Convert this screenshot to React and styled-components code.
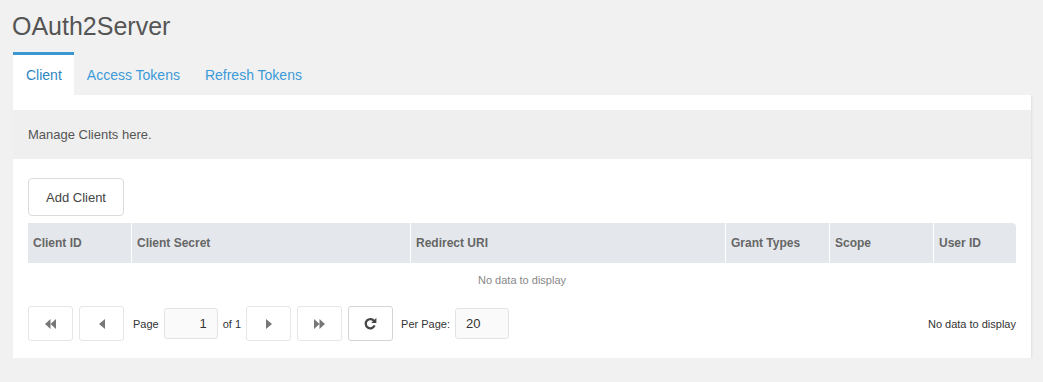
import React from "react";
import styled, { createGlobalStyle } from "styled-components";

const GlobalStyle = createGlobalStyle`
    body {
        margin: 0;
        background: #f1f1f1;
        font-family: "Liberation Sans", Arial, sans-serif;
        color: #555;
    }
`;

const columns = [
    { label: "Client ID", width: 103 },
    { label: "Client Secret", width: 278 },
    { label: "Redirect URI", width: 314 },
    { label: "Grant Types", width: 103 },
    { label: "Scope", width: 103 },
    { label: "User ID", width: 82 },
];

const tabs = ["Client", "Access Tokens", "Refresh Tokens"];

const FirstIcon = () => (
    <svg width="12" height="10" viewBox="0 0 12 10">
        <path d="M0 5 L5.5 0 L5.5 10 Z M5.5 5 L11 0 L11 10 Z" fill="#777" />
    </svg>
);

const PrevIcon = () => (
    <svg width="6" height="10" viewBox="0 0 6 10">
        <path d="M0 5 L6 0 L6 10 Z" fill="#777" />
    </svg>
);

const NextIcon = () => (
    <svg width="6" height="10" viewBox="0 0 6 10">
        <path d="M6 5 L0 0 L0 10 Z" fill="#777" />
    </svg>
);

const LastIcon = () => (
    <svg width="12" height="10" viewBox="0 0 12 10">
        <path d="M11 5 L5.5 0 L5.5 10 Z M5.5 5 L0 0 L0 10 Z" fill="#777" />
    </svg>
);

const RefreshIcon = () => (
    <svg width="13" height="13" viewBox="0 0 13 13">
        <path
            d="M10.2 4.2 A4.6 4.6 0 1 0 10.6 8.4"
            fill="none"
            stroke="#444"
            strokeWidth="2.2"
        />
        <path d="M12.4 0.8 L12.4 6 L7.2 6 Z" fill="#444" />
    </svg>
);

const App = () => {
    return (
        <>
            <GlobalStyle />
            <Page>
                <Title>OAuth2Server</Title>
                <TabBar>
                    {tabs.map((tab, index) => (
                        <Tab key={tab} $active={index === 0}>
                            {tab}
                        </Tab>
                    ))}
                </TabBar>
                <Panel>
                    <InfoBar>Manage Clients here.</InfoBar>
                    <Body>
                        <AddButton>Add Client</AddButton>
                        <Table>
                            <HeaderRow>
                                {columns.map((col, index) => (
                                    <Th
                                        key={col.label}
                                        style={{ width: col.width }}
                                        $last={index === columns.length - 1}
                                    >
                                        {col.label}
                                    </Th>
                                ))}
                            </HeaderRow>
                            <EmptyRow>No data to display</EmptyRow>
                        </Table>
                        <Pager>
                            <PagerGroup>
                                <PagerButton>
                                    <FirstIcon />
                                </PagerButton>
                                <PagerButton>
                                    <PrevIcon />
                                </PagerButton>
                                <PagerLabel $ml={3} $mr={-1}>Page</PagerLabel>
                                <PageInput $align="right">1</PageInput>
                                <PagerLabel $ml={-1} $mr={-1}>of 1</PagerLabel>
                                <PagerButton>
                                    <NextIcon />
                                </PagerButton>
                                <PagerButton>
                                    <LastIcon />
                                </PagerButton>
                                <PagerButton $strong>
                                    <RefreshIcon />
                                </PagerButton>
                                <PagerLabel $ml={2} $mr={-1}>Per Page:</PagerLabel>
                                <PageInput $align="left">20</PageInput>
                            </PagerGroup>
                            <PagerStatus>No data to display</PagerStatus>
                        </Pager>
                    </Body>
                </Panel>
            </Page>
        </>
    );
};

const Page = styled.div`
    padding: 11px 12px 0 13px;
`;

const Title = styled.h1`
    margin: 0 0 11px -1px;
    font-size: 25px;
    line-height: 30px;
    font-weight: 400;
    color: #555;
`;

const TabBar = styled.div`
    display: flex;
    height: 43px;
`;

const Tab = styled.div`
    padding: 0 12px 0 13px;
    display: flex;
    align-items: center;
    font-size: 14px;
    box-sizing: border-box;
    border-top: 3px solid ${(p) => (p.$active ? "#3a97cf" : "transparent")};
    background: ${(p) => (p.$active ? "#fff" : "transparent")};
    color: ${(p) => (p.$active ? "#2f86c1" : "#3c9ad8")};
`;

const Panel = styled.div`
    background: #fff;
    padding: 15px 0 17px;
    box-shadow: 1px 1px 2px rgba(0, 0, 0, 0.08);
`;

const InfoBar = styled.div`
    background: #efefef;
    height: 49px;
    padding: 0 15px;
    display: flex;
    align-items: center;
    font-size: 13px;
    color: #555;
`;

const Body = styled.div`
    padding: 19px 15px 0;
`;

const AddButton = styled.button`
    width: 96px;
    height: 38px;
    background: #fff;
    border: 1px solid #dcdcdc;
    border-radius: 4px;
    font-family: "Liberation Sans", Arial, sans-serif;
    font-size: 13px;
    color: #444;
    padding: 0;
    display: block;
`;

const Table = styled.div`
    margin-top: 7px;
`;

const HeaderRow = styled.div`
    display: flex;
    gap: 1px;
    height: 40px;
`;

const Th = styled.div`
    background: #e4e8ec;
    box-sizing: border-box;
    flex: none;
    padding-left: 5px;
    display: flex;
    align-items: center;
    font-size: 12px;
    font-weight: 700;
    color: #666;
    border-top-right-radius: ${(p) => (p.$last ? "4px" : "0")};
`;

const EmptyRow = styled.div`
    height: 33px;
    display: flex;
    align-items: center;
    justify-content: center;
    font-size: 11px;
    color: #888;
`;

const Pager = styled.div`
    margin-top: 10px;
    display: flex;
    align-items: center;
    justify-content: space-between;
`;

const PagerGroup = styled.div`
    display: flex;
    align-items: center;
    gap: 6px;
`;

const PagerButton = styled.div`
    width: 45px;
    height: 35px;
    box-sizing: border-box;
    border: 1px solid ${(p) => (p.$strong ? "#d4d4d4" : "#e6e6e6")};
    border-radius: 3px;
    display: flex;
    align-items: center;
    justify-content: center;
    background: #fff;
`;

const PagerLabel = styled.span`
    font-size: 11px;
    color: #333;
    margin-left: ${(p) => p.$ml}px;
    margin-right: ${(p) => p.$mr}px;
`;

const PageInput = styled.div`
    width: 54px;
    height: 31px;
    box-sizing: border-box;
    border: 1px solid #e3e3e3;
    border-radius: 3px;
    background: #fafafa;
    font-size: 13px;
    color: #333;
    display: flex;
    align-items: center;
    justify-content: ${(p) => (p.$align === "right" ? "flex-end" : "flex-start")};
    padding: 0 10px;
`;

const PagerStatus = styled.span`
    font-size: 11px;
    color: #333;
`;

export default App;
